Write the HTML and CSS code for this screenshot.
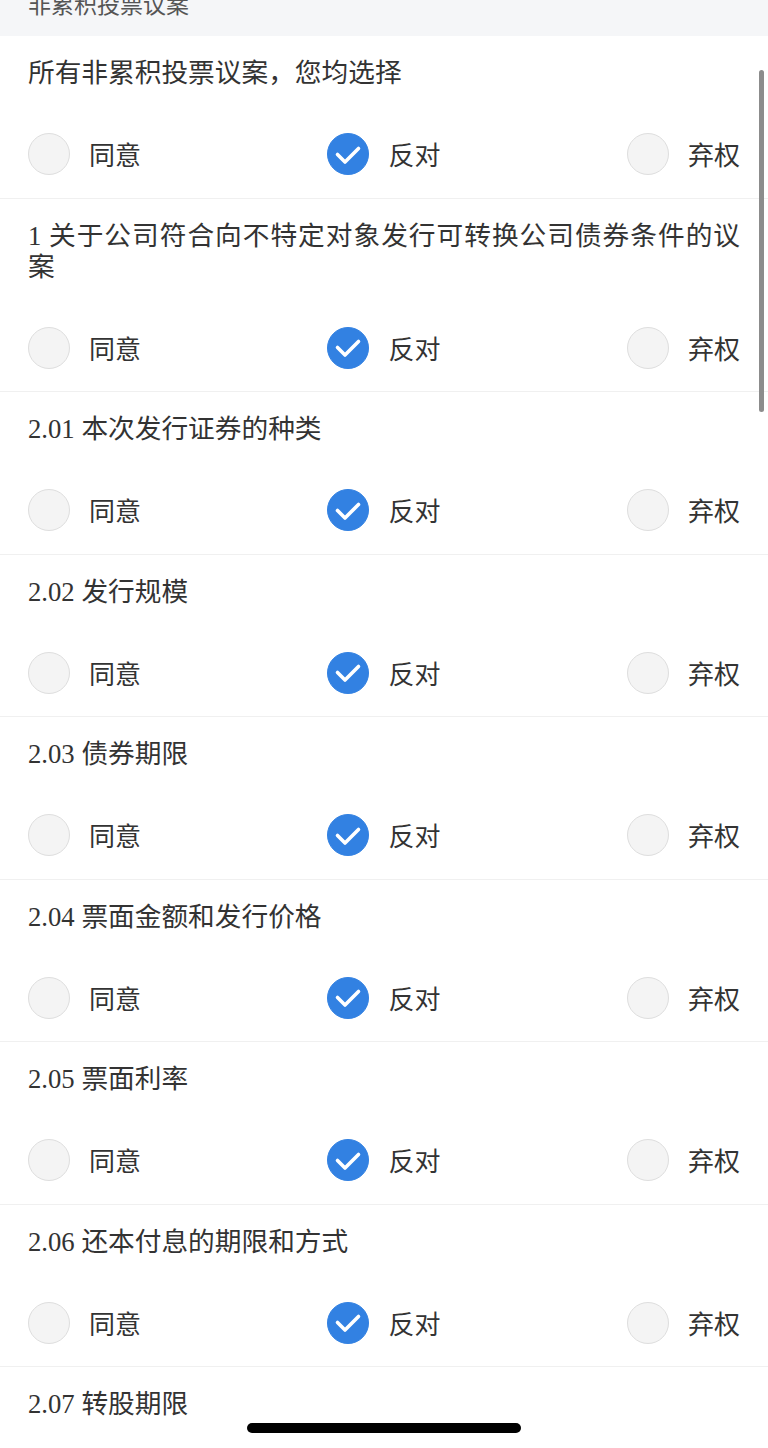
FILE: index.html
```html
<!DOCTYPE html>
<html lang="zh-CN">
<head>
    <meta charset="UTF-8">
    <meta name="viewport" content="width=device-width, initial-scale=1.0">
    <title>非累积投票议案</title>
    <link rel="stylesheet" href="styles.css">
</head>
<body>
    <div class="page">
        <div class="section-title">非累积投票议案</div>

        <!-- All motions at once -->
        <div class="motion">
            <p class="motion-title">所有非累积投票议案，您均选择</p>
            <div class="choices">
                <div class="choice"><span class="radio"></span><span class="choice-label">同意</span></div>
                <div class="choice"><span class="radio checked"><svg viewBox="0 0 42 42"><path d="M10.5 21.5 L18 29 L31.5 15.5"/></svg></span><span class="choice-label">反对</span></div>
                <div class="choice"><span class="radio"></span><span class="choice-label">弃权</span></div>
            </div>
        </div>

        <div class="motion">
            <p class="motion-title">1 关于公司符合向不特定对象发行可转换公司债券条件的议案</p>
            <div class="choices">
                <div class="choice"><span class="radio"></span><span class="choice-label">同意</span></div>
                <div class="choice"><span class="radio checked"><svg viewBox="0 0 42 42"><path d="M10.5 21.5 L18 29 L31.5 15.5"/></svg></span><span class="choice-label">反对</span></div>
                <div class="choice"><span class="radio"></span><span class="choice-label">弃权</span></div>
            </div>
        </div>

        <div class="motion">
            <p class="motion-title">2.01 本次发行证券的种类</p>
            <div class="choices">
                <div class="choice"><span class="radio"></span><span class="choice-label">同意</span></div>
                <div class="choice"><span class="radio checked"><svg viewBox="0 0 42 42"><path d="M10.5 21.5 L18 29 L31.5 15.5"/></svg></span><span class="choice-label">反对</span></div>
                <div class="choice"><span class="radio"></span><span class="choice-label">弃权</span></div>
            </div>
        </div>

        <div class="motion">
            <p class="motion-title">2.02 发行规模</p>
            <div class="choices">
                <div class="choice"><span class="radio"></span><span class="choice-label">同意</span></div>
                <div class="choice"><span class="radio checked"><svg viewBox="0 0 42 42"><path d="M10.5 21.5 L18 29 L31.5 15.5"/></svg></span><span class="choice-label">反对</span></div>
                <div class="choice"><span class="radio"></span><span class="choice-label">弃权</span></div>
            </div>
        </div>

        <div class="motion">
            <p class="motion-title">2.03 债券期限</p>
            <div class="choices">
                <div class="choice"><span class="radio"></span><span class="choice-label">同意</span></div>
                <div class="choice"><span class="radio checked"><svg viewBox="0 0 42 42"><path d="M10.5 21.5 L18 29 L31.5 15.5"/></svg></span><span class="choice-label">反对</span></div>
                <div class="choice"><span class="radio"></span><span class="choice-label">弃权</span></div>
            </div>
        </div>

        <div class="motion">
            <p class="motion-title">2.04 票面金额和发行价格</p>
            <div class="choices">
                <div class="choice"><span class="radio"></span><span class="choice-label">同意</span></div>
                <div class="choice"><span class="radio checked"><svg viewBox="0 0 42 42"><path d="M10.5 21.5 L18 29 L31.5 15.5"/></svg></span><span class="choice-label">反对</span></div>
                <div class="choice"><span class="radio"></span><span class="choice-label">弃权</span></div>
            </div>
        </div>

        <div class="motion">
            <p class="motion-title">2.05 票面利率</p>
            <div class="choices">
                <div class="choice"><span class="radio"></span><span class="choice-label">同意</span></div>
                <div class="choice"><span class="radio checked"><svg viewBox="0 0 42 42"><path d="M10.5 21.5 L18 29 L31.5 15.5"/></svg></span><span class="choice-label">反对</span></div>
                <div class="choice"><span class="radio"></span><span class="choice-label">弃权</span></div>
            </div>
        </div>

        <div class="motion">
            <p class="motion-title">2.06 还本付息的期限和方式</p>
            <div class="choices">
                <div class="choice"><span class="radio"></span><span class="choice-label">同意</span></div>
                <div class="choice"><span class="radio checked"><svg viewBox="0 0 42 42"><path d="M10.5 21.5 L18 29 L31.5 15.5"/></svg></span><span class="choice-label">反对</span></div>
                <div class="choice"><span class="radio"></span><span class="choice-label">弃权</span></div>
            </div>
        </div>

        <div class="motion">
            <p class="motion-title">2.07 转股期限</p>
            <div class="choices">
                <div class="choice"><span class="radio"></span><span class="choice-label">同意</span></div>
                <div class="choice"><span class="radio checked"><svg viewBox="0 0 42 42"><path d="M10.5 21.5 L18 29 L31.5 15.5"/></svg></span><span class="choice-label">反对</span></div>
                <div class="choice"><span class="radio"></span><span class="choice-label">弃权</span></div>
            </div>
        </div>
    </div>

    <!-- iOS overlays -->
    <div class="scroll-indicator"></div>
    <div class="home-indicator"></div>
</body>
</html>
```

FILE: styles.css
```css
/* Base styles */
* {
    margin: 0;
    padding: 0;
    box-sizing: border-box;
}

html, body {
    height: 100%;
    overflow: hidden;
}

body {
    font-family: "Liberation Serif", "Noto Sans CJK SC", serif;
    color: #333;
    background-color: #fff;
}

.page {
    width: 100%;
}

/* Group header, partly scrolled off the top */
.section-title {
    height: 36px;
    padding: 0 28px;
    font-size: 23px;
    line-height: 12px;
    color: #555;
    background-color: #f5f6f8;
    overflow: hidden;
}

/* Motion row */
.motion {
    padding: 22px 28px 22.5px;
    border-bottom: 1px solid #f0f0f0;
}

.motion-title {
    font-size: 26.7px;
    line-height: 31px;
    text-align: justify;
    color: #333;
}

.choices {
    display: flex;
    justify-content: space-between;
    margin-top: 44px;
}

.choice {
    display: flex;
    align-items: center;
    gap: 19px;
}

.choice-label {
    font-family: "Noto Sans CJK SC", sans-serif;
    font-size: 26px;
    line-height: 42px;
    color: #333;
}

.radio {
    width: 42px;
    height: 42px;
    border-radius: 50%;
    background-color: #f4f4f4;
    border: 1.5px solid #dedede;
}

.radio.checked {
    background-color: #3281e2;
    border-color: #3281e2;
}

.radio svg {
    display: block;
    margin: -1.5px;
    width: 42px;
    height: 42px;
    fill: none;
    stroke: #fff;
    stroke-width: 3.6;
    stroke-linecap: round;
    stroke-linejoin: round;
}

/* Overlays */
.scroll-indicator {
    position: fixed;
    top: 70px;
    right: 4px;
    width: 5px;
    height: 342px;
    border-radius: 3px;
    background-color: #8c8c8c;
}

.home-indicator {
    position: fixed;
    left: 247px;
    bottom: 15px;
    width: 274px;
    height: 10px;
    border-radius: 5px;
    background-color: #000;
}
```
